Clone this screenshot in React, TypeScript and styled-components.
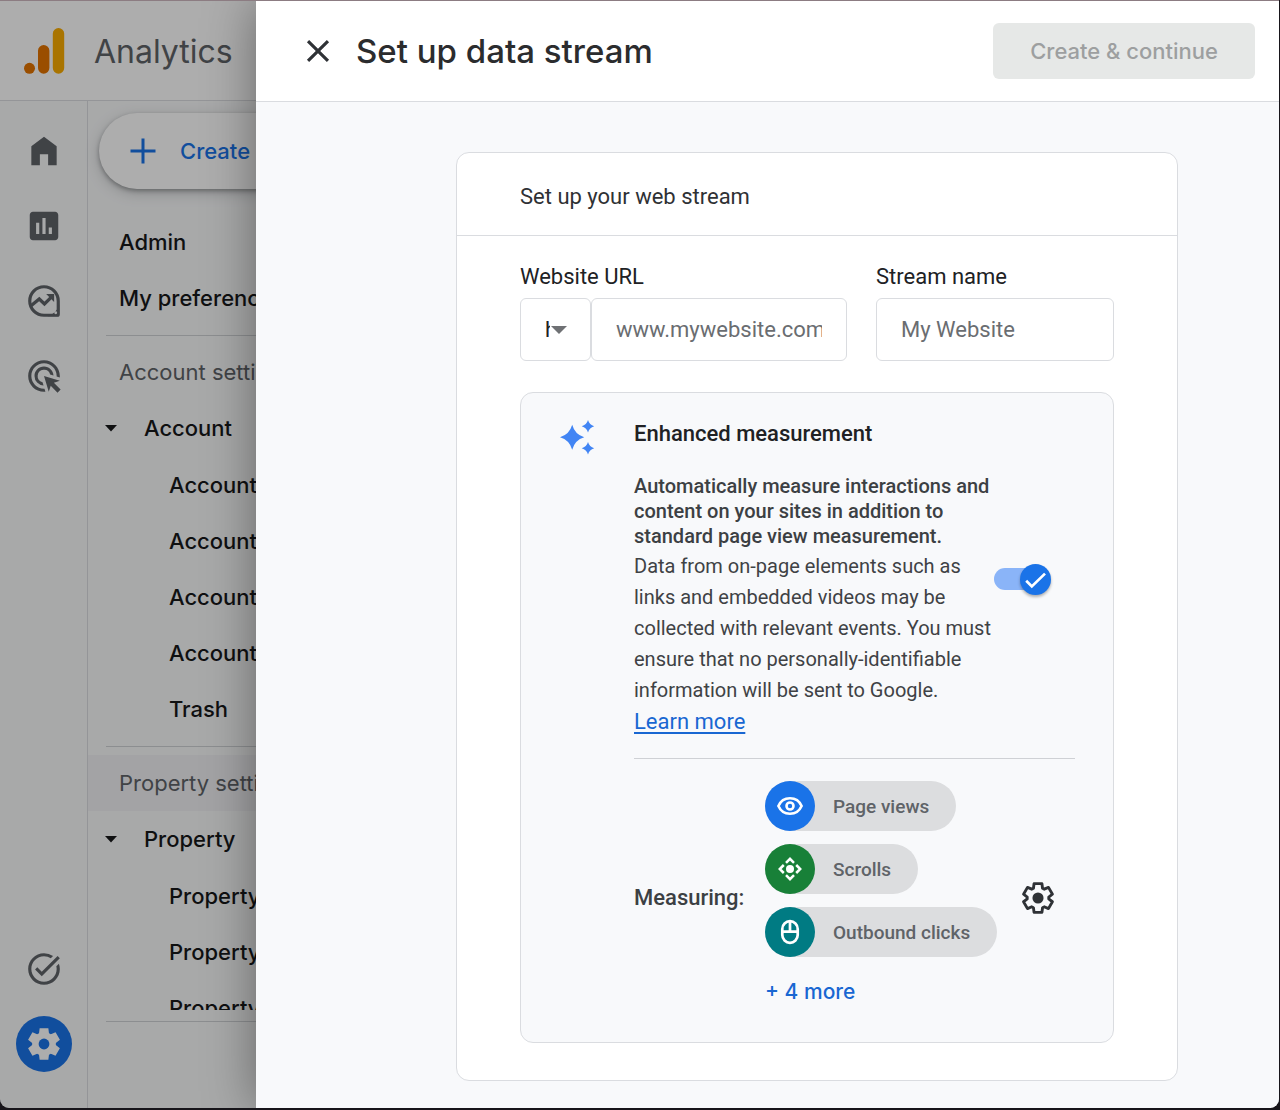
import React from "react";
import styled, { createGlobalStyle, css } from "styled-components";
import { MdAdsClick, MdAssessment, MdClose, MdTaskAlt } from "react-icons/md";

const display = `Inter, "Open Sans", sans-serif`;
const body = `Roboto, "Liberation Sans", sans-serif`;

const GlobalStyle = createGlobalStyle`
  *, *::before, *::after { box-sizing: border-box; }
  body { margin: 0; background: #17151a; font-family: ${body}; color: #202124; }
  button, input, select { font: inherit; color: inherit; margin: 0; }
  h1, h2, h3, p, ul { margin: 0; padding: 0; font-weight: 400; }
  ul { list-style: none; }
`;

/* ---------- window and layers ---------- */

const Window = styled.div`
  display: grid;
  grid-template: minmax(calc(100vh - 3px), auto) / minmax(0, 1fr);
  margin: 0 1px 2px 0;
  border-top: 1px solid #8c7c82;
  border-radius: 0 0 9px 9px;
  overflow: hidden;
  & > * { grid-area: 1 / 1; min-width: 0; }
`;

const AppLayer = styled.div`
  display: flex;
  flex-direction: column;
  min-height: 0;
  background: #f8f9fa;
`;

const Scrim = styled.div`
  background: rgba(0, 0, 0, 0.32);
  z-index: 1;
`;

const Drawer = styled.section`
  z-index: 2;
  display: flex;
  flex-direction: column;
  margin-left: 256px;
  background: #f8f9fb;
  box-shadow: 0 0 48px rgba(0, 0, 0, 0.4);
`;

/* ---------- app behind the drawer ---------- */

const AppHeader = styled.header`
  display: flex;
  align-items: center;
  gap: 29px;
  height: 100px;
  flex: none;
  padding-left: 24px;
  background: #fff;
  border-bottom: 1px solid #dadce0;
`;

const AppName = styled.span`
  padding-top: 2px;
  font: 400 32px/44px ${display};
  color: #5f6368;
`;

const AppBody = styled.div`
  display: flex;
  flex: 1 1 0;
  min-height: 0;
`;

const Rail = styled.nav`
  display: flex;
  flex-direction: column;
  align-items: center;
  gap: 19px;
  width: 88px;
  flex: none;
  padding: 22px 0 36px;
  border-right: 1px solid #dadce0;
`;

const RailSpacer = styled.div`
  flex: 1;
`;

const RailButton = styled.button<{ $active?: boolean }>`
  display: grid;
  place-items: center;
  width: 56px;
  height: 56px;
  padding: 0;
  border: 0;
  border-radius: 50%;
  background: ${(p) => (p.$active ? "#1a73e8" : "transparent")};
  color: ${(p) => (p.$active ? "#fff" : "#5f6368")};
`;

const NavColumn = styled.div`
  display: flex;
  flex-direction: column;
  flex: 1;
  min-width: 0;
  padding-top: 12px;
`;

const CreateButton = styled.button`
  display: flex;
  align-items: center;
  gap: 18px;
  width: 220px;
  height: 76px;
  flex: none;
  margin: 0 0 25px 11px;
  padding: 0 25px;
  border: 0;
  border-radius: 38px;
  background: #fff;
  box-shadow: 0 2px 4px rgba(60, 64, 67, 0.4), 0 4px 14px rgba(60, 64, 67, 0.25);
  color: #1a73e8;
  font: 500 22px/28px ${display};
`;

const NavScroll = styled.nav`
  flex: 1 1 0;
  min-height: 0;
  margin-bottom: 2px;
  overflow: hidden;
`;

const NavRule = styled.hr`
  width: 100%;
  height: 1px;
  flex: none;
  margin: 9px 0 8px 18px;
  border: 0;
  background: #cfd1d4;
`;

const NavFooter = styled.div`
  height: 78px;
  flex: none;
`;

const navRow = css`
  display: flex;
  align-items: center;
  height: 56px;
  font: 500 22px/28px ${display};
  white-space: nowrap;
`;

const NavLink = styled.a<{ $level: number }>`
  ${navRow}
  padding-left: ${(p) => 31 + p.$level * 25}px;
  color: #17181a;
  text-decoration: none;
`;

const NavSection = styled.h2<{ $current?: boolean }>`
  ${navRow}
  padding-left: 31px;
  font-weight: 400;
  color: #5f6368;
  background: ${(p) => (p.$current ? "#f0f1f4" : "transparent")};
`;

const NavToggle = styled.button`
  ${navRow}
  gap: 26px;
  width: 100%;
  padding: 0 0 0 16px;
  border: 0;
  background: none;
  color: #17181a;
`;

const NavGroup = styled.ul`
  padding-top: 1px;
`;

/* ---------- drawer ---------- */

const DrawerHeader = styled.header`
  display: flex;
  align-items: center;
  height: 101px;
  flex: none;
  padding: 0 24px 0 43px;
  background: #fff;
  border-bottom: 1px solid #dadce0;
`;

const IconButton = styled.button`
  display: grid;
  place-items: center;
  width: 38px;
  height: 38px;
  padding: 0;
  border: 0;
  background: none;
  color: #2f3236;
`;

const DrawerTitle = styled.h1`
  flex: 1;
  padding-left: 19px;
  font: 500 33px/44px ${display};
  color: #2b2c2e;
`;

const PrimaryButton = styled.button`
  height: 56px;
  padding: 0 37px;
  border: 0;
  border-radius: 6px;
  background: #e6e8e7;
  font: 500 22px/28px ${display};
  &:disabled { color: #9d9fa0; }
`;

const DrawerBody = styled.div`
  flex: 1;
  padding: 50px 101px 26px 200px;
`;

const Card = styled.form`
  background: #fff;
  border: 1px solid #dadce0;
  border-radius: 13px;
`;

const CardTitle = styled.h2`
  padding: 29px 63px 23px;
  border-bottom: 1px solid #dadce0;
  font-size: 22px;
  line-height: 30px;
  color: #2f3134;
`;

const CardBody = styled.div`
  padding: 26px 63px 37px;
`;

const Fields = styled.div`
  display: grid;
  grid-template-columns: minmax(0, 327fr) minmax(0, 238fr);
  gap: 29px;
  margin-bottom: 31px;
`;

const Label = styled.label`
  display: block;
  margin-bottom: 6px;
  font-size: 22px;
  line-height: 30px;
`;

const FieldRow = styled.div`
  display: flex;
`;

const fieldBox = css`
  height: 63px;
  border: 1px solid #dadce0;
  border-radius: 6px;
  background: #fff;
  font-size: 22px;
`;

const TextInput = styled.input`
  ${fieldBox}
  flex: 1;
  width: 100%;
  min-width: 0;
  padding: 0 24px;
  &::placeholder { color: #6a6d71; opacity: 1; }
`;

const SelectWrap = styled.div`
  display: grid;
  width: 71px;
  flex: none;
  & > * { grid-area: 1 / 1; }
  svg { place-self: center end; margin-right: 24px; pointer-events: none; }
`;

const Select = styled.select`
  ${fieldBox}
  width: 100%;
  padding: 0 40px 0 24px;
  appearance: none;
`;

const Panel = styled.section`
  display: grid;
  grid-template-columns: 74px minmax(0, 1fr);
  padding: 25px 38px 28px 39px;
  background: #f8f9fb;
  border: 1px solid #dadce0;
  border-radius: 13px;
`;

const SparkSlot = styled.div`
  padding-top: 2px;
`;

const Description = styled.div`
  display: grid;
  grid-template-columns: minmax(0, 360px) auto;
  justify-content: space-between;
  align-items: center;
  padding-right: 24px;
`;

const PanelTitle = styled.h3`
  margin-bottom: 25px;
  font-size: 22px;
  font-weight: 500;
  line-height: 31px;
`;

const Lead = styled.p`
  margin-bottom: 2px;
  font-size: 20px;
  font-weight: 500;
  line-height: 25px;
  color: #3c4043;
`;

const Detail = styled.p`
  margin-bottom: 2px;
  font-size: 20px;
  line-height: 31px;
  color: #3f4245;
`;

const LearnMore = styled.a`
  font-size: 22px;
  color: #1967d2;
  text-underline-offset: 3px;
`;

const Switch = styled.label`
  display: grid;
  align-items: center;
  width: 57px;
  & > * { grid-area: 1 / 1; }
`;

const SwitchInput = styled.input`
  width: 52px;
  height: 22px;
  margin: 0;
  appearance: none;
  border-radius: 11px;
  background: #8ab4f8;
`;

const SwitchThumb = styled.span`
  display: grid;
  place-items: center;
  justify-self: end;
  width: 31px;
  height: 31px;
  border-radius: 50%;
  background: #1a73e8;
  color: #fff;
  box-shadow: 0 2px 3px rgba(0, 0, 0, 0.3);
`;

const PanelRule = styled.hr`
  height: 1px;
  margin: 18px 0 22px;
  border: 0;
  background: #cfd1d5;
`;

const Measuring = styled.div`
  display: flex;
  align-items: center;
  padding-right: 18px;
`;

const MeasuringLabel = styled.span`
  width: 131px;
  flex: none;
  font-size: 22px;
  font-weight: 500;
  line-height: 30px;
  color: #3c4043;
`;

const ChipList = styled.ul`
  display: flex;
  flex: 1;
  flex-direction: column;
  align-items: flex-start;
  gap: 13px;
`;

const Chip = styled.li`
  display: flex;
  align-items: center;
  gap: 18px;
  height: 50px;
  padding-right: 27px;
  border-radius: 25px;
  background: #dcdddf;
  color: #5f6368;
  font-size: 19px;
  font-weight: 500;
`;

const ChipIcon = styled.span<{ $color: string }>`
  display: grid;
  place-items: center;
  width: 50px;
  height: 50px;
  border-radius: 50%;
  background: ${(p) => p.$color};
  color: #fff;
`;

const MoreButton = styled.button`
  height: 44px;
  padding: 0;
  border: 0;
  background: none;
  color: #1967d2;
  font: 500 21px/28px ${display};
`;

/* ---------- drawings ---------- */

const AnalyticsLogo = () => (
  <svg width="41" height="46" viewBox="0 0 41 46" aria-hidden="true">
    <circle cx="5.5" cy="40.3" r="5.5" fill="#e37400" />
    <rect x="14" y="17" width="11.4" height="28.7" rx="5.7" fill="#e37400" />
    <rect x="28.8" y="0" width="11.4" height="45.7" rx="5.7" fill="#f9ab00" />
  </svg>
);

const HomeIcon = () => (
  <svg width="38" height="38" viewBox="0 0 24 24" fill="currentColor" aria-hidden="true">
    <path d="M4 21V9l8-6 8 6v12h-5.4v-7H9.4v7z" />
  </svg>
);

const ExploreIcon = () => (
  <svg width="38" height="38" viewBox="0 0 24 24" fill="none" stroke="currentColor" aria-hidden="true">
    <path d="M21 12A9 9 0 1 0 12 21h8.2a.8.8 0 0 0 .8-.8z" strokeWidth="2" />
    <path d="M21.6 14.2v7.4h-7.4a10.8 10.8 0 0 0 7.4-7.4z" fill="currentColor" stroke="none" />
    <circle cx="19.4" cy="19.4" r=".9" fill="#f8f9fa" stroke="none" />
    <path d="M3.8 15 9 10.7l3.3 3.2 5-5" strokeWidth="2.1" />
    <path d="M13.4 7.6h5v5z" fill="currentColor" stroke="none" />
  </svg>
);

const GEAR =
  "M9.25 22l-.4-3.2q-.325-.125-.612-.3-.288-.175-.563-.375L4.7 19.375l-2.75-4.75 2.575-1.95Q4.5 12.5 4.5 12.337v-.675q0-.162.025-.337L1.95 9.375l2.75-4.75 2.975 1.25q.275-.2.575-.375.3-.175.6-.3l.4-3.2h5.5l.4 3.2q.325.125.613.3.287.175.562.375l2.975-1.25 2.75 4.75-2.575 1.95q.025.175.025.337v.675q0 .163-.05.338l2.575 1.95-2.75 4.75-2.95-1.25q-.275.2-.575.375-.3.175-.6.3l-.4 3.2z";

const GearFilled = () => (
  <svg width="38" height="38" viewBox="0 0 24 24" aria-hidden="true">
    <path d={GEAR} fill="currentColor" />
    <circle cx="12" cy="12" r="3.4" fill="#1a73e8" />
  </svg>
);

const GearOutline = () => (
  <svg width="38" height="38" viewBox="0 0 24 24" aria-hidden="true">
    <g transform="translate(1.1 1.1) scale(.908)">
      <path d={GEAR} fill="none" stroke="currentColor" strokeWidth="2" strokeLinejoin="round" />
    </g>
    <circle cx="12" cy="12" r="3.5" fill="currentColor" />
  </svg>
);

const PlusIcon = () => (
  <svg width="38" height="38" viewBox="0 0 38 38" aria-hidden="true">
    <path d="M19 6.5v25M6.5 19h25" stroke="currentColor" strokeWidth="3" />
  </svg>
);

const Caret = () => (
  <svg width="14" height="7" viewBox="0 0 14 7" fill="currentColor" aria-hidden="true">
    <path d="M1 0h12L7 6.5z" />
  </svg>
);

const SelectArrow = () => (
  <svg width="16" height="8" viewBox="0 0 16 8" fill="#6f7174" aria-hidden="true">
    <path d="M0 0h16L8 8z" />
  </svg>
);

const Sparkles = () => (
  <svg width="36" height="35" viewBox="0 0 36 35" fill="#4285f4" aria-hidden="true">
    <path d="M12.2 4.8Q14.8 14.4 24.2 17.3 14.8 20.1 12.2 29.8 9.5 20.1 0 17.3 9.5 14.4 12.2 4.8z" />
    <path d="M28 0Q29.4 4.9 34.2 6.2 29.4 7.5 28 12.4 26.6 7.5 21.7 6.2 26.6 4.9 28 0z" />
    <path d="M28 22Q29.4 26.9 34.2 28.2 29.4 29.5 28 34.4 26.6 29.5 21.7 28.2 26.6 26.9 28 22z" />
  </svg>
);

const CheckIcon = () => (
  <svg width="31" height="31" viewBox="0 0 31 31" fill="none" aria-hidden="true">
    <path d="M6.2 16.8l5.6 5.6L25 9.6" stroke="currentColor" strokeWidth="2.7" />
  </svg>
);

const EyeIcon = () => (
  <svg width="28" height="28" viewBox="0 0 28 28" fill="none" stroke="currentColor" strokeWidth="2.6" aria-hidden="true">
    <path d="M2.4 14C4.5 9.2 8.9 6.3 14 6.3S23.5 9.2 25.6 14C23.5 18.8 19.1 21.7 14 21.7S4.5 18.8 2.4 14z" />
    <circle cx="14" cy="14" r="3.5" />
  </svg>
);

const ScrollIcon = () => (
  <svg width="28" height="28" viewBox="0 0 28 28" fill="none" stroke="currentColor" strokeWidth="2.5" aria-hidden="true">
    <path d="M10 7.8l4-4 4 4M10 20.2l4 4 4-4M7.8 10l-4 4 4 4M20.2 10l4 4-4 4" />
    <circle cx="14" cy="14" r="4" fill="currentColor" stroke="none" />
  </svg>
);

const MouseIcon = () => (
  <svg width="28" height="28" viewBox="0 0 28 28" fill="none" stroke="currentColor" strokeWidth="2.7" aria-hidden="true">
    <rect x="6.3" y="3.2" width="15.4" height="21.6" rx="7.7" />
    <path d="M14 3v10.6M6.2 13.6h15.6" />
  </svg>
);

/* ---------- data ---------- */

const chips = [
  { label: "Page views", color: "#1a73e8", icon: <EyeIcon /> },
  { label: "Scrolls", color: "#188038", icon: <ScrollIcon /> },
  { label: "Outbound clicks", color: "#007b83", icon: <MouseIcon /> },
];

const accountLinks = [
  "Account details",
  "Account access management",
  "Account filters",
  "Account change history",
  "Trash",
];

const propertyLinks = ["Property details", "Property access management", "Property change history"];

const LinkGroup = ({ items }: { items: string[] }) => (
  <NavGroup>
    {items.map((item) => (
      <li key={item}>
        <NavLink href="#" $level={2}>{item}</NavLink>
      </li>
    ))}
  </NavGroup>
);

export default function App() {
  return (
    <>
      <GlobalStyle />
      <Window>
        <AppLayer>
          <AppHeader>
            <AnalyticsLogo />
            <AppName>Analytics</AppName>
          </AppHeader>
          <AppBody>
            <Rail aria-label="Main">
              <RailButton aria-label="Home"><HomeIcon /></RailButton>
              <RailButton aria-label="Reports"><MdAssessment size={38} /></RailButton>
              <RailButton aria-label="Explore"><ExploreIcon /></RailButton>
              <RailButton aria-label="Advertising"><MdAdsClick size={38} /></RailButton>
              <RailSpacer />
              <RailButton aria-label="Tasks"><MdTaskAlt size={38} /></RailButton>
              <RailButton aria-label="Admin" $active><GearFilled /></RailButton>
            </Rail>
            <NavColumn>
              <CreateButton><PlusIcon />Create</CreateButton>
              <NavScroll aria-label="Admin">
                <NavLink href="#" $level={0}>Admin</NavLink>
                <NavLink href="#" $level={0}>My preferences</NavLink>
                <NavRule />
                <NavSection>Account settings</NavSection>
                <NavToggle><Caret />Account</NavToggle>
                <LinkGroup items={accountLinks} />
                <NavRule />
                <NavSection $current>Property settings</NavSection>
                <NavToggle><Caret />Property</NavToggle>
                <LinkGroup items={propertyLinks} />
              </NavScroll>
              <NavRule />
              <NavFooter />
            </NavColumn>
          </AppBody>
        </AppLayer>
        <Scrim />
        <Drawer aria-labelledby="drawer-title">
          <DrawerHeader>
            <IconButton aria-label="Close"><MdClose size={38} /></IconButton>
            <DrawerTitle id="drawer-title">Set up data stream</DrawerTitle>
            <PrimaryButton disabled>Create &amp; continue</PrimaryButton>
          </DrawerHeader>
          <DrawerBody>
            <Card onSubmit={(e) => e.preventDefault()}>
              <CardTitle>Set up your web stream</CardTitle>
              <CardBody>
                <Fields>
                  <div>
                    <Label htmlFor="url">Website URL</Label>
                    <FieldRow>
                      <SelectWrap>
                        <Select aria-label="Protocol" defaultValue="https://">
                          <option>https://</option>
                          <option>http://</option>
                        </Select>
                        <SelectArrow />
                      </SelectWrap>
                      <TextInput id="url" placeholder="www.mywebsite.com" />
                    </FieldRow>
                  </div>
                  <div>
                    <Label htmlFor="stream">Stream name</Label>
                    <FieldRow>
                      <TextInput id="stream" placeholder="My Website" />
                    </FieldRow>
                  </div>
                </Fields>
                <Panel>
                  <SparkSlot><Sparkles /></SparkSlot>
                  <div>
                    <Description>
                      <div>
                        <PanelTitle>Enhanced measurement</PanelTitle>
                        <Lead>
                          Automatically measure interactions and content on your sites in addition to
                          standard page view measurement.
                        </Lead>
                        <Detail>
                          Data from on-page elements such as links and embedded videos may be collected
                          with relevant events. You must ensure that no personally-identifiable
                          information will be sent to Google.{" "}
                          <LearnMore href="#">Learn more</LearnMore>
                        </Detail>
                      </div>
                      <Switch>
                        <SwitchInput type="checkbox" role="switch" aria-label="Enhanced measurement" defaultChecked />
                        <SwitchThumb><CheckIcon /></SwitchThumb>
                      </Switch>
                    </Description>
                    <PanelRule />
                    <Measuring>
                      <MeasuringLabel>Measuring:</MeasuringLabel>
                      <ChipList>
                        {chips.map((chip) => (
                          <Chip key={chip.label}>
                            <ChipIcon $color={chip.color}>{chip.icon}</ChipIcon>
                            {chip.label}
                          </Chip>
                        ))}
                        <li>
                          <MoreButton type="button">+ 4 more</MoreButton>
                        </li>
                      </ChipList>
                      <IconButton type="button" aria-label="Measurement settings"><GearOutline /></IconButton>
                    </Measuring>
                  </div>
                </Panel>
              </CardBody>
            </Card>
          </DrawerBody>
        </Drawer>
      </Window>
    </>
  );
}
